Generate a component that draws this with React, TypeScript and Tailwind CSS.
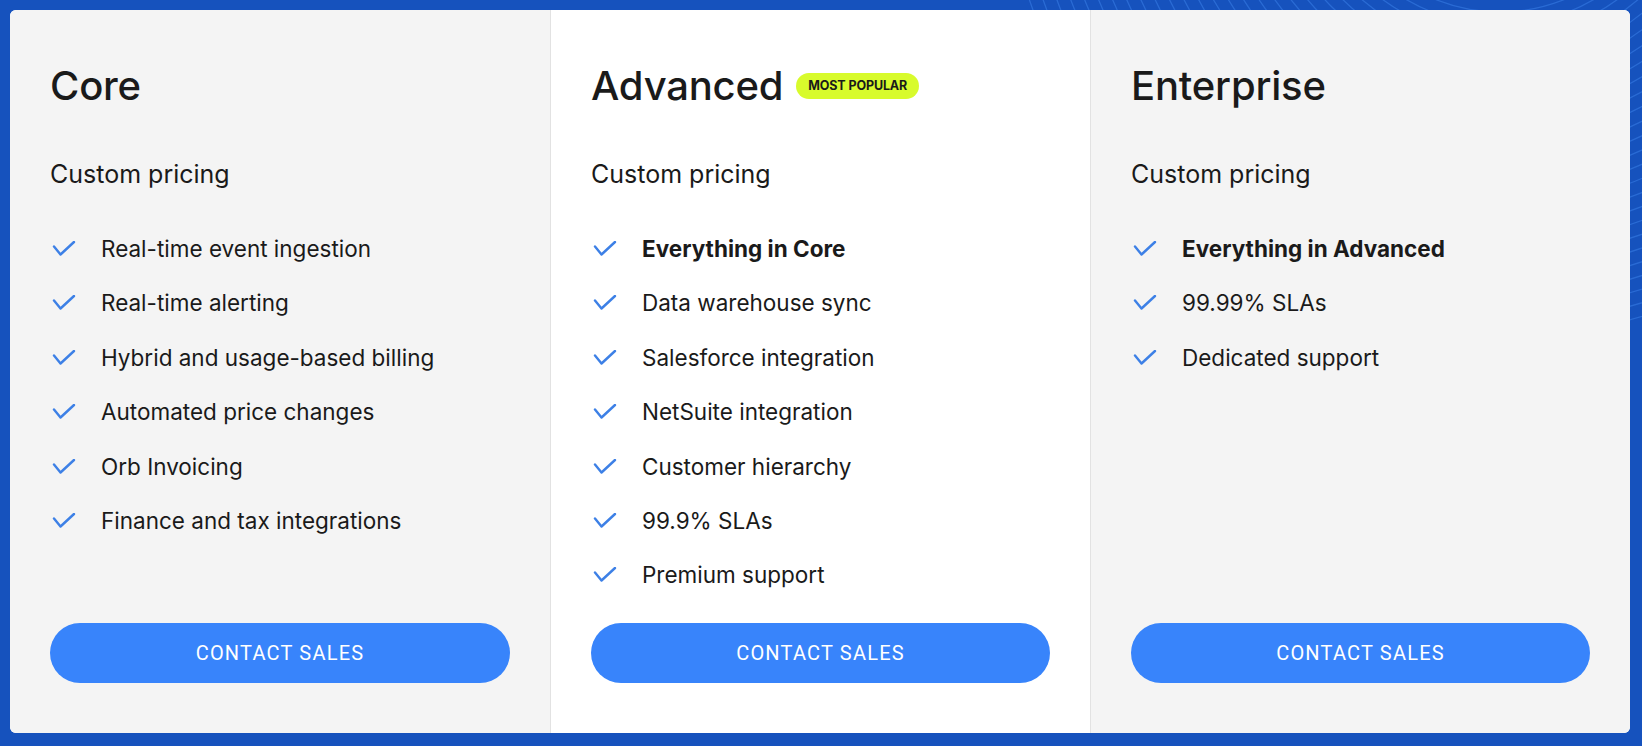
import React from "react";

type Plan = {
  name: string;
  badge?: string;
  bg: string;
  features: { text: string; bold?: boolean }[];
};

const plans: Plan[] = [
  {
    name: "Core",
    bg: "bg-[#f4f4f4]",
    features: [
      { text: "Real-time event ingestion" },
      { text: "Real-time alerting" },
      { text: "Hybrid and usage-based billing" },
      { text: "Automated price changes" },
      { text: "Orb Invoicing" },
      { text: "Finance and tax integrations" },
    ],
  },
  {
    name: "Advanced",
    badge: "MOST POPULAR",
    bg: "bg-white",
    features: [
      { text: "Everything in Core", bold: true },
      { text: "Data warehouse sync" },
      { text: "Salesforce integration" },
      { text: "NetSuite integration" },
      { text: "Customer hierarchy" },
      { text: "99.9% SLAs" },
      { text: "Premium support" },
    ],
  },
  {
    name: "Enterprise",
    bg: "bg-[#f4f4f4]",
    features: [
      { text: "Everything in Advanced", bold: true },
      { text: "99.99% SLAs" },
      { text: "Dedicated support" },
    ],
  },
];

function Check() {
  return (
    <svg width="24" height="16" viewBox="0 0 24 16" className="shrink-0" fill="none">
      <path d="M2 5.5 L8.5 13.5 L22 1" stroke="#3d80e6" strokeWidth="2.4" strokeLinecap="round" strokeLinejoin="round" />
    </svg>
  );
}

function Waves() {
  const arcs = [];
  for (let i = 0; i < 30; i++) {
    arcs.push(
      <circle key={i} cx="1500" cy="-160" r={120 + i * 13} fill="none" stroke="#3b7fe8" strokeOpacity="0.55" strokeWidth="1.3" />
    );
  }
  return (
    <svg className="absolute inset-0 h-full w-full" viewBox="0 0 1642 746" preserveAspectRatio="none">
      {arcs}
    </svg>
  );
}

export default function App() {
  return (
    <div
      className="relative h-[746px] w-[1642px] overflow-hidden bg-[#1652bd] pt-[10px] pl-[10px] pr-[12px] pb-[13px]"
      style={{ fontFamily: "Inter, 'Noto Sans', sans-serif" }}
    >
      <Waves />
      <div className="relative grid h-full grid-cols-3 overflow-hidden rounded-[6px] bg-white">
        {plans.map((p, idx) => (
          <div
            key={p.name}
            className={`flex flex-col px-[40px] pt-[56px] pb-[50px] ${p.bg} ${idx > 0 ? "border-l border-[#e2e2e2]" : ""}`}
          >
            <div className="flex h-[40px] items-center gap-[13px]">
              <h2 className="text-[40px] font-medium leading-[40px] tracking-[-0.005em] text-[#1a1a1a]">{p.name}</h2>
              {p.badge && (
                <span className="flex h-[26px] items-center rounded-full bg-[#d8fb2c] px-[12px] text-[12.5px] font-bold leading-none tracking-[-0.01em] text-[#1a1a1a]">
                  {p.badge}
                </span>
              )}
            </div>
            <div className="mt-[52px] text-[25px] leading-[32px] text-[#1a1a1a]">Custom pricing</div>
            <ul className="mt-[44px] flex flex-col gap-[24.4px]">
              {p.features.map((f) => (
                <li key={f.text} className="flex h-[30px] items-center gap-[25px] pl-[2px]">
                  <Check />
                  <span className={`text-[22.5px] leading-[30px] text-[#1a1a1a] ${f.bold ? "font-bold" : "font-normal"}`}>
                    {f.text}
                  </span>
                </li>
              ))}
            </ul>
            <button
              className="mt-auto flex h-[60px] w-full items-center justify-center rounded-full bg-[#3884fb] text-[20px] font-normal tracking-[0.06em] text-white"
              style={{ fontFamily: "Roboto, 'Liberation Sans', sans-serif" }}
            >
              CONTACT SALES
            </button>
          </div>
        ))}
      </div>
    </div>
  );
}
